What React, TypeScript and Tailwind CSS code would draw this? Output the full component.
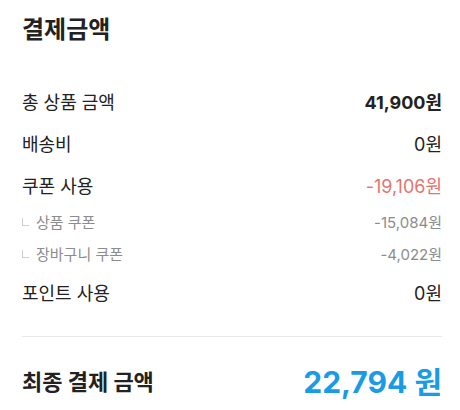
const font = { fontFamily: 'Inter, "Noto Sans CJK KR", "Noto Sans", sans-serif' };

type Row = { label: string; value: string; tone?: "bold" | "red" };

const rows: Row[] = [
  { label: "총 상품 금액", value: "41,900원", tone: "bold" },
  { label: "배송비", value: "0원" },
  { label: "쿠폰 사용", value: "-19,106원", tone: "red" },
];

const subRows = [
  { label: "상품 쿠폰", value: "-15,084원" },
  { label: "장바구니 쿠폰", value: "-4,022원" },
];

function MainRow({ label, value, tone, h }: Row & { h: string }) {
  const valueCls =
    tone === "bold"
      ? "font-bold text-[#222]"
      : tone === "red"
        ? "text-[#e57470]"
        : "text-[#222]";
  return (
    <div className={`flex items-center justify-between ${h}`}>
      <span className="text-[18px] text-[#222]">{label}</span>
      <span className={`text-[18px] ${valueCls}`}>{value}</span>
    </div>
  );
}

export default function App() {
  return (
    <div className="w-[460px] h-[410px] bg-white pl-[22px] pr-[18px] pt-[14px] overflow-hidden" style={font}>
      <h1 className="text-[24px] font-bold leading-[32px] text-[#222]">결제금액</h1>

      <div className="mt-[35px]">
        <MainRow {...rows[0]} h="h-[42px]" />
        <MainRow {...rows[1]} h="h-[42px]" />
        <MainRow {...rows[2]} h="h-[42px]" />

        {subRows.map((r) => (
          <div key={r.label} className="flex items-center justify-between h-[32px]">
            <div className="flex items-center gap-[7px]">
              <span className="w-[7px] h-[8px] border-l border-b border-[#cfcfcf] -mt-[3px]" />
              <span className="text-[15px] text-[#8c8c8c]">{r.label}</span>
            </div>
            <span className="text-[15px] text-[#8c8c8c]">{r.value}</span>
          </div>
        ))}

        <MainRow label="포인트 사용" value="0원" h="h-[44px]" />
      </div>

      <div className="mt-[21px] border-t border-[#e8e8e8]" />

      <div className="flex items-center justify-between h-[90px]">
        <span className="text-[22px] font-bold text-[#222]">최종 결제 금액</span>
        <span className="text-[30px] font-bold text-[#1a9be6]">22,794 원</span>
      </div>
    </div>
  );
}
